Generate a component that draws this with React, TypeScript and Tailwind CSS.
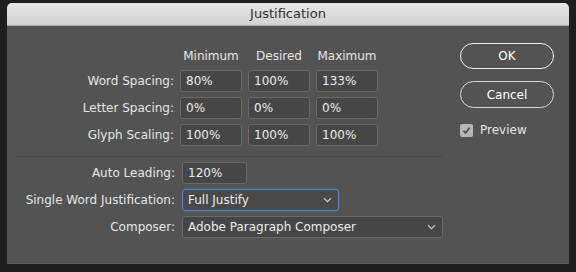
import React from "react";

const font = { fontFamily: '"DejaVu Sans", sans-serif' };

function Chevron() {
  return (
    <svg width="9" height="6" viewBox="0 0 9 6" className="shrink-0">
      <path d="M1 1.2 L4.5 4.6 L8 1.2" fill="none" stroke="#c8c8c8" strokeWidth="1.3" />
    </svg>
  );
}

function Field({ value }: { value: string }) {
  return (
    <div className="h-[22px] rounded-[3px] border border-[#696969] bg-[#464646] pl-[5px] flex items-center text-[12px] text-[#ececec]">
      {value}
    </div>
  );
}

function Label({ children }: { children: React.ReactNode }) {
  return <div className="text-right text-[12px] text-[#e6e6e6] whitespace-nowrap">{children}</div>;
}

export default function App() {
  const rows = [
    ["Word Spacing:", "80%", "100%", "133%"],
    ["Letter Spacing:", "0%", "0%", "0%"],
    ["Glyph Scaling:", "100%", "100%", "100%"],
  ];
  return (
    <div className="w-[576px] h-[272px] bg-[#1e1e1e] pt-[3px] pl-[7px]" style={font}>
      <div className="w-[562px] h-[261px] rounded-t-[5px] bg-[#535353] flex flex-col overflow-hidden border-b border-[#5e5e5e]">
        <div className="h-[23px] shrink-0 bg-gradient-to-b from-[#e6e6e6] to-[#d2d2d2] border-b border-[#a9a9a9] flex items-center justify-center text-[13px] text-[#2e2e2e]">
          Justification
        </div>
        <div className="flex flex-1">
          <div className="pl-[9px] pt-[21px] w-[443px]">
            <div className="grid grid-cols-[158px_62px_62px_62px] gap-x-[6px] gap-y-[5px] items-center">
              <div />
              <div className="h-[16px] mb-[2px] text-center text-[12px] text-[#e6e6e6]">Minimum</div>
              <div className="h-[16px] mb-[2px] text-center text-[12px] text-[#e6e6e6]">Desired</div>
              <div className="h-[16px] mb-[2px] text-center text-[12px] text-[#e6e6e6]">Maximum</div>
              {rows.map((r) => (
                <React.Fragment key={r[0]}>
                  <Label>{r[0]}</Label>
                  <Field value={r[1]} />
                  <Field value={r[2]} />
                  <Field value={r[3]} />
                </React.Fragment>
              ))}
            </div>
            <div className="mt-[10px] h-px bg-[#474747] w-[426px]" />
            <div className="mt-[5px] grid grid-cols-[159px_1fr] gap-x-[7px] gap-y-[5px] items-center">
              <Label>Auto Leading:</Label>
              <div className="w-[65px]">
                <Field value="120%" />
              </div>
              <Label>Single Word Justification:</Label>
              <div className="w-[157px] h-[22px] rounded-[3px] border-[1.5px] border-[#4a8fdc] bg-[#494949] pl-[5px] pr-[6px] flex items-center justify-between text-[12px] text-[#ececec]">
                <span>Full Justify</span>
                <Chevron />
              </div>
              <Label>Composer:</Label>
              <div className="w-[261px] h-[22px] rounded-[3px] border border-[#696969] bg-[#464646] pl-[5px] pr-[6px] flex items-center justify-between text-[12px] text-[#ececec]">
                <span>Adobe Paragraph Composer</span>
                <Chevron />
              </div>
            </div>
          </div>
          <div className="pl-[10px] pt-[17px] flex flex-col">
            <button className="w-[94px] h-[26px] rounded-full border-[1.5px] border-[#f0f0f0] text-[12px] text-white">
              OK
            </button>
            <button className="mt-[12px] w-[94px] h-[27px] rounded-full border-[1.5px] border-[#d8d8d8] text-[12px] text-white">
              Cancel
            </button>
            <div className="mt-[13px] flex items-center gap-[7px]">
              <div className="w-[13px] h-[13px] rounded-[2px] bg-[#b5b5b5] flex items-center justify-center">
                <svg width="9" height="9" viewBox="0 0 9 9">
                  <path d="M1.5 4.8 L3.6 7 L7.6 1.8" fill="none" stroke="#4a4a4a" strokeWidth="1.6" />
                </svg>
              </div>
              <span className="text-[12px] text-[#e6e6e6]">Preview</span>
            </div>
          </div>
        </div>
      </div>
    </div>
  );
}
